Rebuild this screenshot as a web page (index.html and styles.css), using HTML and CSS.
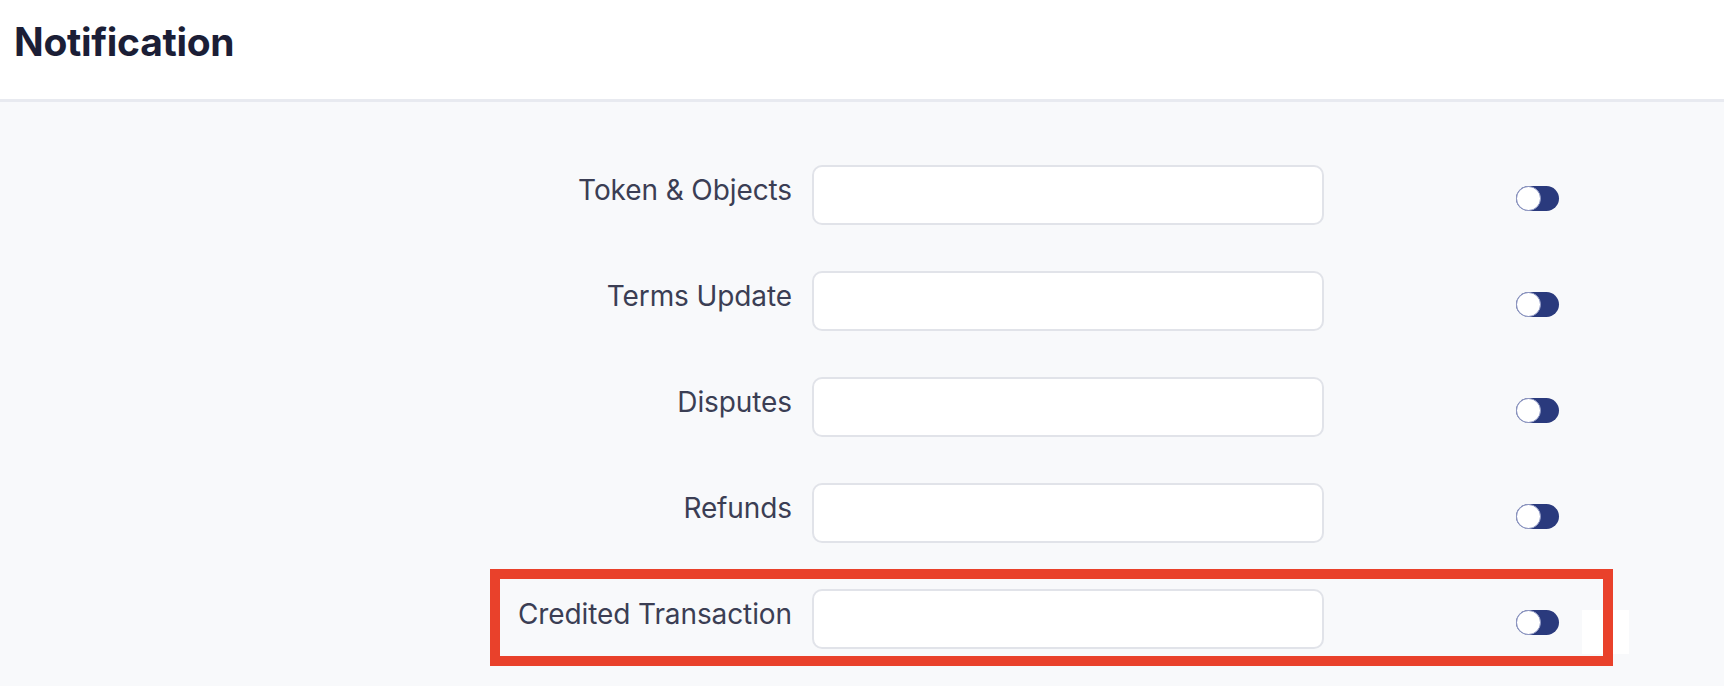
FILE: index.html
```html
<!DOCTYPE html>
<html lang="en">
<head>
    <meta charset="UTF-8">
    <meta name="viewport" content="width=device-width, initial-scale=1.0">
    <title>Notification</title>
    <link rel="stylesheet" href="styles.css">
</head>
<body>
    <header class="page-header">
        <h1>Notification</h1>
    </header>
    <main class="page-body">
        <form class="settings">
            <div class="row">
                <label for="token_objects">Token &amp; Objects</label>
                <input type="text" id="token_objects" name="token_objects">
                <span class="toggle"><span class="knob"></span></span>
            </div>
            <div class="row">
                <label for="terms_update">Terms Update</label>
                <input type="text" id="terms_update" name="terms_update">
                <span class="toggle"><span class="knob"></span></span>
            </div>
            <div class="row">
                <label for="disputes">Disputes</label>
                <input type="text" id="disputes" name="disputes">
                <span class="toggle"><span class="knob"></span></span>
            </div>
            <div class="row">
                <label for="refunds">Refunds</label>
                <input type="text" id="refunds" name="refunds">
                <span class="toggle"><span class="knob"></span></span>
            </div>
            <div class="row">
                <label for="credited_transaction">Credited Transaction</label>
                <input type="text" id="credited_transaction" name="credited_transaction">
                <span class="toggle"><span class="knob"></span></span>
            </div>
        </form>
        <!-- annotation marks from the screenshot -->
        <div class="patch"></div>
        <div class="highlight"></div>
    </main>
</body>
</html>
```

FILE: styles.css
```css
html, body {
    margin: 0;
    padding: 0;
}
body {
    font-family: Inter, "Noto Sans", sans-serif;
    background-color: #f8f9fb;
    width: 1724px;
    height: 686px;
    overflow: hidden;
}
.page-header {
    background-color: #fff;
    height: 99px;
    border-bottom: 3px solid #e8eaf0;
    box-sizing: content-box;
}
h1 {
    margin: 0;
    padding: 18px 0 0 14px;
    font-size: 39px;
    font-weight: 700;
    line-height: 48px;
    color: #1b1e36;
    letter-spacing: -0.3px;
}
.page-body {
    position: relative;
    padding-top: 63px;
}
.settings {
    display: flex;
    flex-direction: column;
    gap: 46px;
}
.row {
    display: flex;
    align-items: center;
    height: 60px;
}
.row label {
    width: 792px;
    margin-right: 20px;
    margin-bottom: 10px;
    text-align: right;
    font-size: 28px;
    line-height: 34px;
    color: #3b3e54;
    letter-spacing: -0.1px;
}
.row input {
    width: 512px;
    height: 60px;
    box-sizing: border-box;
    border: 2px solid #e1e3e9;
    border-radius: 10px;
    background-color: #fff;
    padding: 0 14px;
    font-family: inherit;
    font-size: 24px;
}
.toggle {
    display: flex;
    align-items: center;
    width: 43px;
    height: 25px;
    margin-left: 192px;
    margin-top: 7px;
    border-radius: 13px;
    background-color: #2a3a7d;
}
.knob {
    width: 23px;
    height: 23px;
    border-radius: 50%;
    border: 1px solid #8e97c4;
    background-color: #fff;
}
.patch {
    position: absolute;
    left: 1582px;
    top: 508px;
    width: 47px;
    height: 44px;
    background-color: #fff;
}
.highlight {
    position: absolute;
    left: 490px;
    top: 467px;
    width: 1123px;
    height: 97px;
    box-sizing: border-box;
    border: 10px solid #e9412b;
}
```
